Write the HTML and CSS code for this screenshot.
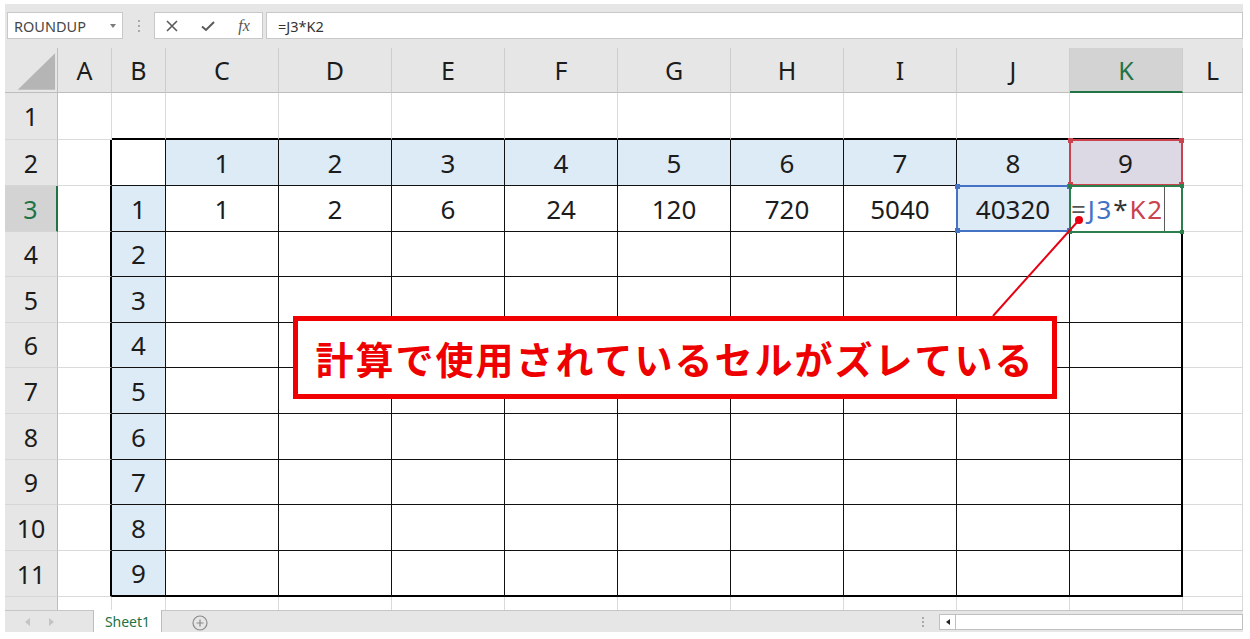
FILE: index.html
```html
<!DOCTYPE html>
<html lang="ja">
<head>
<meta charset="utf-8">
<title>Excel</title>
<link rel="stylesheet" href="styles.css">
</head>
<body>
<div class="page">
 <div class="app">
  <div class="fbar">
   <div class="namebox"><span>ROUNDUP</span><span class="nb-arrow"></span></div>
   <div class="grip"><i></i><i></i><i></i></div>
   <div class="fbtns">
    <span class="slot"><svg width="12" height="12" viewBox="0 0 12 12"><path d="M1 1 L11 11 M11 1 L1 11" stroke="#5a5a5a" stroke-width="1.6" fill="none"/></svg></span>
    <span class="slot"><svg width="14" height="12" viewBox="0 0 14 12"><path d="M1 6.5 L5 10 L13 2" stroke="#5a5a5a" stroke-width="2" fill="none"/></svg></span>
    <span class="slot fx">fx</span>
   </div>
   <div class="finput">=J3*K2</div>
  </div>

  <div class="sheet">
   <div class="grid">
    <div class="corner"><svg width="53" height="45" viewBox="0 0 53 45"><polygon points="51,5 51,42 13,42" fill="#b5b5b5"/></svg></div>
    <div class="ch">A</div><div class="ch">B</div><div class="ch">C</div><div class="ch">D</div><div class="ch">E</div><div class="ch">F</div><div class="ch">G</div><div class="ch">H</div><div class="ch">I</div><div class="ch">J</div><div class="ch sel">K</div><div class="ch">L</div>

    <div class="rh">1</div><div class="c"></div>
    <div class="c top"></div><div class="c top"></div><div class="c top"></div><div class="c top"></div><div class="c top"></div><div class="c top"></div><div class="c top"></div><div class="c top"></div><div class="c top"></div><div class="c top"></div>
    <div class="c"></div>

    <div class="rh">2</div><div class="c lft"></div>
    <div class="c t"></div>
    <div class="c t hd">1</div><div class="c t hd">2</div><div class="c t hd">3</div><div class="c t hd">4</div><div class="c t hd">5</div><div class="c t hd">6</div><div class="c t hd">7</div><div class="c t hd">8</div>
    <div class="c t rgt k2">9<div class="mark red"><span class="sq tl"></span><span class="sq tr"></span><span class="sq bl"></span><span class="sq br"></span></div></div>
    <div class="c"></div>

    <div class="rh sel">3</div><div class="c lft"></div>
    <div class="c t hd">1</div>
    <div class="c t">1</div><div class="c t">2</div><div class="c t">6</div><div class="c t">24</div><div class="c t">120</div><div class="c t">720</div><div class="c t">5040</div>
    <div class="c t hd">40320<div class="mark blue"><span class="sq tl"></span><span class="sq tr"></span><span class="sq bl"></span><span class="sq br"></span></div></div>
    <div class="c t rgt"><div class="edit"><span class="eq">=</span><span class="rb">J3</span><span class="op">*</span><span class="rr">K2</span></div><div class="mark green"><span class="sq tl"></span><span class="sq tr"></span><span class="sq bl"></span><span class="sq br"></span></div></div>
    <div class="c"></div>

    <div class="rh">4</div><div class="c lft"></div><div class="c t hd">2</div>
    <div class="c t"></div><div class="c t"></div><div class="c t"></div><div class="c t"></div><div class="c t"></div><div class="c t"></div><div class="c t"></div><div class="c t"></div>
    <div class="c t rgt"></div><div class="c"></div>

    <div class="rh">5</div><div class="c lft"></div><div class="c t hd">3</div>
    <div class="c t"></div><div class="c t"></div><div class="c t"></div><div class="c t"></div><div class="c t"></div><div class="c t"></div><div class="c t"></div><div class="c t"></div>
    <div class="c t rgt"></div><div class="c"></div>

    <div class="rh">6</div><div class="c lft"></div><div class="c t hd">4</div>
    <div class="c t"></div><div class="c t"></div><div class="c t"></div><div class="c t"></div><div class="c t"></div><div class="c t"></div><div class="c t"></div><div class="c t"></div>
    <div class="c t rgt"></div><div class="c"></div>

    <div class="rh">7</div><div class="c lft"></div><div class="c t hd">5</div>
    <div class="c t"></div><div class="c t"></div><div class="c t"></div><div class="c t"></div><div class="c t"></div><div class="c t"></div><div class="c t"></div><div class="c t"></div>
    <div class="c t rgt"></div><div class="c"></div>

    <div class="rh">8</div><div class="c lft"></div><div class="c t hd">6</div>
    <div class="c t"></div><div class="c t"></div><div class="c t"></div><div class="c t"></div><div class="c t"></div><div class="c t"></div><div class="c t"></div><div class="c t"></div>
    <div class="c t rgt"></div><div class="c"></div>

    <div class="rh">9</div><div class="c lft"></div><div class="c t hd">7</div>
    <div class="c t"></div><div class="c t"></div><div class="c t"></div><div class="c t"></div><div class="c t"></div><div class="c t"></div><div class="c t"></div><div class="c t"></div>
    <div class="c t rgt"></div><div class="c"></div>

    <div class="rh">10</div><div class="c lft"></div><div class="c t hd">8</div>
    <div class="c t"></div><div class="c t"></div><div class="c t"></div><div class="c t"></div><div class="c t"></div><div class="c t"></div><div class="c t"></div><div class="c t"></div>
    <div class="c t rgt"></div><div class="c"></div>

    <div class="rh">11</div><div class="c lft"></div><div class="c t hd bot">9</div>
    <div class="c t bot"></div><div class="c t bot"></div><div class="c t bot"></div><div class="c t bot"></div><div class="c t bot"></div><div class="c t bot"></div><div class="c t bot"></div><div class="c t bot"></div>
    <div class="c t rgt bot"></div><div class="c"></div>

    <div class="rh r12">12</div><div class="c"></div><div class="c"></div><div class="c"></div><div class="c"></div><div class="c"></div><div class="c"></div><div class="c"></div><div class="c"></div><div class="c"></div><div class="c"></div><div class="c"></div><div class="c"></div>
   </div>

   <svg class="pointer" width="1238" height="562" viewBox="0 0 1238 562">
    <line x1="1074" y1="172" x2="988" y2="268" stroke="#e60012" stroke-width="2"/>
    <circle cx="1074" cy="172" r="4" fill="#e60012"/>
   </svg>
   <div class="callout">計算で使用されているセルがズレている</div>
  </div>

  <div class="tabbar">
   <div class="nav"><span class="tri-l"></span><span class="tri-r"></span></div>
   <div class="tab">Sheet1</div>
   <div class="plus"><svg width="16" height="16" viewBox="0 0 16 16"><circle cx="8" cy="8" r="7" stroke="#8a8a8a" stroke-width="1.2" fill="none"/><path d="M8 4.5 V11.5 M4.5 8 H11.5" stroke="#8a8a8a" stroke-width="1.2"/></svg></div>
   <div class="right">
    <div class="grip2"><i></i><i></i><i></i></div>
    <div class="hscroll"><span class="sbtn"><span class="tri-s"></span></span><span class="track"></span></div>
   </div>
  </div>
 </div>
</div>
</body>
</html>
```
FILE: styles.css
```css
html, body {
  margin: 0;
  padding: 0;
  background: #ffffff;
}
.page {
  width: 1250px;
  height: 639px;
  box-sizing: border-box;
  padding: 4px 7px 7px 5px;
  overflow: hidden;
}
.app {
  width: 1238px;
  background: #e6e6e6;
  font-family: "Noto Sans", "Noto Sans CJK JP", sans-serif;
}

/* formula bar */
.fbar {
  height: 44px;
  box-sizing: border-box;
  display: flex;
  align-items: flex-start;
  padding: 8px 0 0 2px;
}
.namebox {
  width: 116px;
  height: 27px;
  box-sizing: border-box;
  background: #fff;
  border: 1px solid #c8c8c8;
  display: flex;
  align-items: center;
  padding-left: 6px;
  font-size: 14.5px;
  color: #474747;
  position: relative;
}
.nb-arrow {
  position: absolute;
  right: 6px;
  top: 11px;
  width: 0;
  height: 0;
  border-left: 3px solid transparent;
  border-right: 3px solid transparent;
  border-top: 4px solid #7a7a7a;
}
.grip {
  width: 31px;
  height: 27px;
  display: flex;
  flex-direction: column;
  align-items: center;
  justify-content: center;
  gap: 3px;
}
.grip i, .grip2 i {
  display: block;
  width: 2px;
  height: 2px;
  background: #a9a9a9;
}
.fbtns {
  width: 109px;
  height: 27px;
  box-sizing: border-box;
  background: #fff;
  border: 1px solid #c8c8c8;
  display: flex;
  align-items: center;
}
.slot {
  width: 36px;
  height: 25px;
  display: flex;
  align-items: center;
  justify-content: center;
}
.slot:first-child {
  margin-left: -1px;
}
.fx {
  font-family: "Liberation Serif", serif;
  font-style: italic;
  font-size: 16px;
  color: #555;
}
.finput {
  flex: 1;
  margin-left: 3px;
  height: 27px;
  box-sizing: border-box;
  background: #fff;
  border: 1px solid #c8c8c8;
  padding-left: 11px;
  display: flex;
  align-items: center;
  font-size: 14.5px;
  color: #333;
}

/* sheet */
.sheet {
  position: relative;
  height: 562px;
  overflow: hidden;
  background: #fff;
}
.grid {
  display: grid;
  grid-template-columns: 53px 54px 54px repeat(9, 113px) 60px;
  grid-template-rows: 45px 47px 46px 46px 45px 46px 45px 46px 46px 45px 46px 46px 46px;
}
.grid > div {
  box-sizing: border-box;
  display: flex;
  align-items: center;
  justify-content: center;
  font-size: 26px;
  color: #1c1c1c;
}
.corner {
  background: #e6e6e6;
  border-right: 1px solid #bdbdbd;
  border-bottom: 1px solid #bdbdbd;
}
.corner svg { display: block; }
.ch {
  background: #e6e6e6;
  border-right: 1px solid #cdcdcd;
  border-bottom: 1px solid #bdbdbd;
  font-size: 25px !important;
}
.ch.sel {
  background: #d3d3d3;
  color: #217346 !important;
  border-bottom: 2px solid #217346;
}
.rh {
  background: #e6e6e6;
  border-right: 1px solid #bdbdbd;
  border-bottom: 1px solid #d6d6d6;
  font-size: 25px !important;
}
.rh.r12 {
  align-items: flex-start !important;
  padding-top: 6px;
}
.rh.sel {
  background: #d3d3d3;
  color: #217346 !important;
  border-right: 2px solid #217346;
}
.c {
  background: #fff;
  border-right: 1px solid #dadada;
  border-bottom: 1px solid #dadada;
  position: relative;
}
.c.t {
  border-right-color: #111;
  border-bottom-color: #111;
}
.c.top { border-bottom: 2px solid #000; }
.c.lft { border-right: 2px solid #000; }
.c.rgt { border-right: 2px solid #000; }
.c.bot { border-bottom: 2px solid #000; }
.c.hd { background: #ddebf7; }
.c.k2 { background: #dcd9e4; }

/* reference highlight marks */
.mark {
  position: absolute;
  z-index: 2;
  top: -1px;
  left: -1px;
  right: -2px;
  bottom: -1px;
  border: 2px solid currentColor;
  pointer-events: none;
}
.mark.red { color: #c9424d; }
.mark.blue { color: #4472c4; }
.mark.green {
  z-index: 3;
  color: #2a7f4c;
  top: -1px;
  left: -1px;
  bottom: -2px;
}
.sq {
  position: absolute;
  width: 5px;
  height: 5px;
  background: currentColor;
}
.sq.tl { left: -3px; top: -3px; }
.sq.tr { right: -3px; top: -3px; }
.sq.bl { left: -3px; bottom: -3px; }
.sq.br { right: -3px; bottom: -3px; }
.green .sq { width: 4px; height: 4px; }

.edit {
  position: absolute;
  left: 0;
  top: 0;
  bottom: 0;
  width: 95px;
  box-sizing: border-box;
  border-right: 1.5px solid #5a5a5a;
  display: flex;
  align-items: center;
  padding-left: 1px;
  font-size: 26px;
  letter-spacing: 1.8px;
}
.eq { color: #555; }
.rb { color: #4472c4; }
.op { color: #333; }
.rr { color: #c9424d; }

/* callout */
.pointer {
  position: absolute;
  z-index: 4;
  left: 0;
  top: 0;
  pointer-events: none;
}
.callout {
  position: absolute;
  z-index: 5;
  left: 288px;
  top: 268px;
  width: 764px;
  height: 83px;
  box-sizing: border-box;
  border: 5px solid #f00000;
  background: #fff;
  display: flex;
  align-items: center;
  justify-content: center;
  font-family: "Noto Sans CJK JP", sans-serif;
  font-weight: 700;
  font-size: 38px;
  letter-spacing: 2px;
  color: #ee0000;
}

/* tab bar */
.tabbar {
  height: 22px;
  box-sizing: border-box;
  border-top: 1px solid #c6c6c6;
  background: #e6e6e6;
  display: flex;
  align-items: stretch;
}
.nav {
  width: 88px;
  display: flex;
  align-items: center;
  padding-left: 20px;
  gap: 19px;
  box-sizing: border-box;
}
.tri-l, .tri-r, .tri-s {
  width: 0;
  height: 0;
  border-top: 4px solid transparent;
  border-bottom: 4px solid transparent;
}
.tri-l { border-right: 5px solid #c4c4c4; }
.tri-r { border-left: 5px solid #c4c4c4; }
.tab {
  width: 69px;
  box-sizing: border-box;
  margin-top: -1px;
  background: #fff;
  border-left: 1px solid #bdbdbd;
  border-right: 1px solid #bdbdbd;
  display: flex;
  align-items: center;
  justify-content: center;
  font-size: 14px;
  color: #217346;
}
.plus {
  margin-left: 30px;
  display: flex;
  align-items: center;
}
.plus svg { display: block; margin-top: 2px; }
.right {
  margin-left: auto;
  display: flex;
  align-items: center;
}
.grip2 {
  width: 23px;
  display: flex;
  flex-direction: column;
  gap: 2px;
  padding-left: 6px;
  box-sizing: border-box;
}
.hscroll {
  width: 304px;
  height: 16px;
  box-sizing: border-box;
  border: 1px solid #c0c0c0;
  background: #fff;
  display: flex;
}
.sbtn {
  width: 15px;
  border-right: 1px solid #c0c0c0;
  display: flex;
  align-items: center;
  justify-content: center;
}
.tri-s {
  border-top-width: 3.5px;
  border-bottom-width: 3.5px;
  border-right: 4px solid #222;
}
.track { flex: 1; }
```
